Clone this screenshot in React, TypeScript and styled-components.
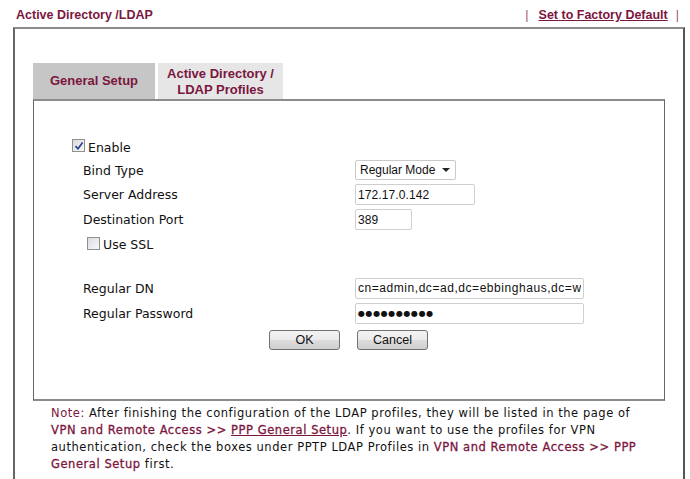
import styled, { createGlobalStyle } from "styled-components"

const maroon = "#7b163e"

const GlobalStyle = createGlobalStyle`
  html, body {
    margin: 0;
    padding: 0;
    background: #fff;
  }
  body {
    font-family: "DejaVu Sans", Verdana, sans-serif;
    color: #111;
    overflow: hidden;
  }
`

const fields = [
    { label: 'Bind Type', kind: 'select', value: 'Regular Mode', h: 24 },
    { label: 'Server Address', kind: 'text', value: '172.17.0.142', w: 120, h: 25 },
    { label: 'Destination Port', kind: 'text', value: '389', w: 57, h: 25 },
]

const CheckBox = ({ checked }: { checked?: boolean }) => (
    <Box>
        {checked && (
            <svg width="10" height="10" viewBox="0 0 10 10">
                <path d="M1.5 5.2 L4 7.8 L8.6 1.6" fill="none" stroke="#2b3f8c" strokeWidth="1.7" />
            </svg>
        )}
    </Box>
)

const App = () => {
    return (
        <>
            <GlobalStyle />
            <Header>
                <Title>Active Directory /LDAP</Title>
                <Links>
                    <Pipe>|</Pipe>
                    <FactoryLink>Set to Factory Default</FactoryLink>
                    <Pipe>|</Pipe>
                </Links>
            </Header>
            <Outer>
                <Tabs>
                    <Tab $active $w={122}>General Setup</Tab>
                    <Tab $w={125}>Active Directory /<br />LDAP Profiles</Tab>
                </Tabs>
                <Panel>
                    <Row $h={22}>
                        <CheckLabel $shift={-11}>
                            <CheckBox checked />
                            Enable
                        </CheckLabel>
                    </Row>
                    {fields.map((f, i) => (
                        <Row key={i} $h={f.h}>
                            <Label>{f.label}</Label>
                            {f.kind === 'select' ? (
                                <Select>
                                    Regular Mode
                                    <Arrow />
                                </Select>
                            ) : (
                                <Field $w={f.w || 120} readOnly value={f.value} />
                            )}
                        </Row>
                    ))}
                    <Row $h={25}>
                        <CheckLabel $shift={4}>
                            <CheckBox />
                            Use SSL
                        </CheckLabel>
                    </Row>
                    <Spacer />
                    <Row $h={24}>
                        <Label>Regular DN</Label>
                        <Field $w={229} $wide readOnly value="cn=admin,dc=ad,dc=ebbinghaus,dc=world" />
                    </Row>
                    <Row $h={26}>
                        <Label>Regular Password</Label>
                        <DotField>●●●●●●●●●●</DotField>
                    </Row>
                    <Buttons>
                        <Button>OK</Button>
                        <Button>Cancel</Button>
                    </Buttons>
                </Panel>
                <Note>
                    <NoteTag>Note:</NoteTag> After finishing the configuration of the LDAP profiles, they will be listed in the page of<br />
                    <NoteLink>VPN and Remote Access &gt;&gt; <u>PPP General Setup</u></NoteLink>. If you want to use the profiles for VPN<br />
                    authentication, check the boxes under PPTP LDAP Profiles in <NoteLink>VPN and Remote Access &gt;&gt; PPP</NoteLink><br />
                    <NoteLink>General Setup</NoteLink> first.
                </Note>
            </Outer>
        </>
    )
}

const Header = styled.div`
  display: flex;
  justify-content: space-between;
  align-items: flex-start;
  height: 27px;
  box-sizing: border-box;
  padding: 7px 4px 0 16px;
  font-family: "Liberation Sans", Arial, sans-serif;
  font-weight: bold;
  font-size: 12.5px;
  line-height: 16px;
  color: ${maroon};
`

const Title = styled.div``

const Links = styled.div`
  display: flex;
`

const Pipe = styled.span`
  color: #a0506e;
  font-weight: normal;
  padding: 0 7px;
`

const FactoryLink = styled.span`
  text-decoration: underline;
  padding: 0 1px 0 3px;
`

const Outer = styled.div`
  margin-left: 13px;
  width: 672px;
  height: 460px;
  box-sizing: border-box;
  border-top: 2px solid #8c8c8c;
  border-left: 2px solid #666;
  border-right: 2px solid #555;
  padding: 34px 18px 0 18px;
`

const Tabs = styled.div`
  display: flex;
  gap: 3px;
  height: 36px;
`

const Tab = styled.div<{ $active?: boolean; $w: number }>`
  width: ${p => p.$w}px;
  display: flex;
  align-items: center;
  justify-content: center;
  text-align: center;
  background: ${p => (p.$active ? '#c6c6c6' : '#e6e6e6')};
  color: ${maroon};
  font-family: "Liberation Sans", Arial, sans-serif;
  font-weight: bold;
  font-size: 13px;
  line-height: 16px;
  padding-top: ${p => (p.$active ? 0 : 1)}px;
`

const Panel = styled.div`
  height: 302px;
  box-sizing: border-box;
  border: 1px solid #666;
  border-top: 2px solid #8c8c8c;
  border-bottom: 2px solid #8c8c8c;
  padding: 35px 0 0 49px;
  font-size: 12.5px;
`

const Row = styled.div<{ $h: number }>`
  display: flex;
  align-items: center;
  height: ${p => p.$h}px;
`

const Label = styled.div`
  width: 272px;
  flex: none;
`

const CheckLabel = styled.div<{ $shift: number }>`
  display: flex;
  align-items: center;
  gap: 3px;
  margin-left: ${p => p.$shift}px;
`

const Box = styled.span`
  width: 11px;
  height: 11px;
  border: 1px solid #8e8f8f;
  background: linear-gradient(135deg, #d8dbe0, #f8f8f8);
  display: inline-flex;
  align-items: center;
  justify-content: center;
  margin-top: -3px;
`

const Select = styled.div`
  width: 101px;
  height: 20px;
  box-sizing: border-box;
  border: 1px solid #c9c9c9;
  border-radius: 2px;
  padding: 0 0 0 4px;
  display: flex;
  align-items: center;
  justify-content: space-between;
  white-space: nowrap;
  font-family: "Liberation Sans", Arial, sans-serif;
  font-size: 12px;
`

const Arrow = styled.span`
  width: 0;
  height: 0;
  border-left: 4px solid transparent;
  border-right: 4px solid transparent;
  border-top: 4px solid #222;
  margin-right: 5px;
`

const Field = styled.input<{ $w: number; $wide?: boolean }>`
  width: ${p => p.$w}px;
  height: 21px;
  box-sizing: border-box;
  border: 1px solid #cfcfcf;
  border-radius: 2px;
  padding: 0 2px;
  font-family: "Liberation Sans", Arial, sans-serif;
  font-size: 12px;
  letter-spacing: ${p => (p.$wide ? 0.55 : 0.1)}px;
  color: #111;
  outline: none;
`

const DotField = styled.div`
  width: 229px;
  height: 21px;
  box-sizing: border-box;
  border: 1px solid #cfcfcf;
  border-radius: 2px;
  padding: 0 2px;
  display: flex;
  align-items: center;
  font-size: 8px;
  letter-spacing: 0.6px;
  color: #111;
`

const Spacer = styled.div`
  height: 19px;
`

const Buttons = styled.div`
  display: flex;
  gap: 17px;
  padding: 4px 0 0 186px;
`

const Button = styled.button`
  width: 71px;
  height: 20px;
  box-sizing: border-box;
  border: 1px solid #707070;
  border-radius: 3px;
  background: linear-gradient(#f3f3f3, #ebebeb 50%, #dddddd 51%, #cfcfcf);
  font-family: "Liberation Sans", Arial, sans-serif;
  font-size: 12.5px;
  color: #111;
  padding: 0;
`

const Note = styled.div`
  padding: 4px 0 0 18px;
  font-size: 11.5px;
  letter-spacing: 0.55px;
  line-height: 17px;
  white-space: nowrap;
  color: #111;
`

const NoteTag = styled.span`
  color: ${maroon};
`

const NoteLink = styled.span`
  color: ${maroon};
  -webkit-text-stroke: 0.3px ${maroon};
`

export default App
